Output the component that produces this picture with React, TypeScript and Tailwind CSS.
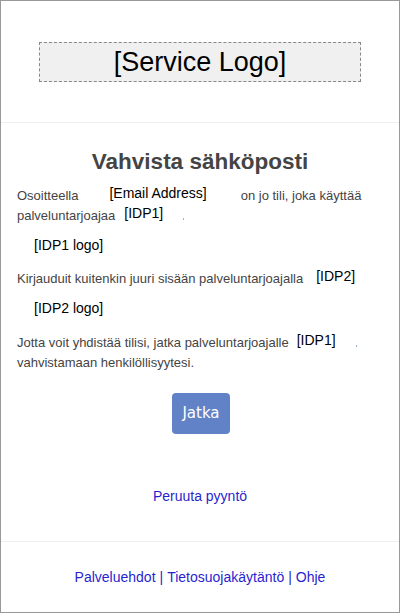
import React from "react";

const sans = "font-['Liberation_Sans',Arial,sans-serif]";

function Placeholder({ children, className = "" }: { children: React.ReactNode; className?: string }) {
    return <span className={`inline-block text-[14px] leading-[14px] text-black align-[2px] ${className}`}>{children}</span>;
}

function Dot({ className = "" }: { className?: string }) {
    return <span className={`inline-block w-[1px] h-[2px] bg-[#9db3c9] align-baseline ${className}`} />;
}

export default function App() {
    return (
        <div className={`w-[400px] h-[613px] border border-[#999] bg-white flex flex-col ${sans}`}>
            {/* Header */}
            <div className="pt-[41px] pb-[40px] border-b border-[#eee] flex justify-center">
                <div className="w-[322px] h-[40px] border border-dashed border-[#888] bg-[#f0f0f0] flex items-center justify-center text-[27px] leading-[38px] text-black">
                    [Service Logo]
                </div>
            </div>

            {/* Content */}
            <div className="flex-1 flex flex-col pt-[26px] px-[16px]">
                <h1 className="text-center text-[22.5px] leading-[26px] font-bold text-[#444]">
                    Vahvista sähköposti
                </h1>

                <p className="mt-[11px] text-[13px] leading-[20px] text-[#444] whitespace-nowrap">
                    Osoitteella
                    <Placeholder className="ml-[31px] mr-[34px]">[Email Address]</Placeholder>
                    on jo tili, joka käyttää
                    <br />
                    palveluntarjoajaa
                    <Placeholder className="ml-[9px]">[IDP1]</Placeholder>
                    <Dot className="ml-[20px]" />
                </p>

                <div className="mt-[9px] ml-[17px] text-[14px] leading-[20px] text-black">[IDP1 logo]</div>

                <p className="mt-[14px] text-[13px] leading-[20px] text-[#444] whitespace-nowrap">
                    Kirjauduit kuitenkin juuri sisään palveluntarjoajalla
                    <Placeholder className="ml-[13px]">[IDP2]</Placeholder>
                </p>

                <div className="mt-[9px] ml-[17px] text-[14px] leading-[20px] text-black">[IDP2 logo]</div>

                <p className="mt-[15px] text-[13px] leading-[20px] text-[#444] whitespace-nowrap">
                    Jotta voit yhdistää tilisi, jatka palveluntarjoajalle
                    <Placeholder className="ml-[8px]">[IDP1]</Placeholder>
                    <Dot className="ml-[20px]" />
                    <br />
                    vahvistamaan henkilöllisyytesi.
                </p>

                <div className="mt-[20px] flex justify-center">
                    <button className="ml-[2px] w-[58px] h-[41px] rounded-[4px] bg-[#6282c7] text-white text-[15px] font-['DejaVu_Sans',sans-serif]">
                        Jatka
                    </button>
                </div>

                <div className="mt-[52px] text-center text-[14px] leading-[20px]">
                    <a className="text-[#2a1fcf]">Peruuta pyyntö</a>
                </div>
            </div>

            {/* Footer */}
            <div className="h-[71px] border-t border-[#eee] flex items-center justify-center text-[14px] leading-[20px] text-[#2a1fcf]">
                <a>Palveluehdot</a>
                <span className="mx-[4px]">|</span>
                <a>Tietosuojakäytäntö</a>
                <span className="mx-[4px]">|</span>
                <a>Ohje</a>
            </div>
        </div>
    );
}
